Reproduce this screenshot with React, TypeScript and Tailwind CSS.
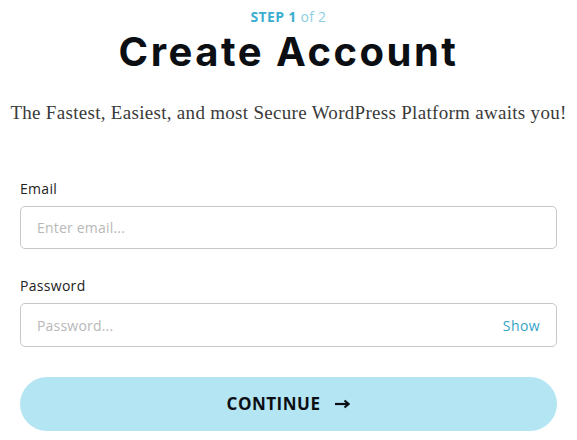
import React from "react";

const App = () => {
    return (
        <div className="min-h-[440px] w-[577px] bg-white font-['Open_Sans',sans-serif]">
            {/* Header */}
            <div className="flex flex-col items-center pt-[7px]">
                <p className="text-[14px] font-bold leading-[20px] tracking-[0.3px]">
                    <span className="text-[#3aaed0]">STEP 1</span>{" "}
                    <span className="font-medium text-[#8ed0e4]">of 2</span>
                </p>
                <h1 className="mt-[2px] font-['Inter',sans-serif] text-[40px] font-bold leading-[46px] tracking-[2.5px] text-[#0b0f14]">
                    Create Account
                </h1>
            </div>
            <p className="mt-[24px] text-center font-['Liberation_Serif',serif] text-[19px] leading-[28px] tracking-[0.3px] text-[#3a3a3a]">
                The Fastest, Easiest, and most Secure WordPress Platform awaits you!
            </p>

            {/* Form */}
            <form className="mt-[52px] flex flex-col px-[20px]">
                <label className="text-[14px] font-medium leading-[20px] tracking-[0.3px] text-[#222]">Email</label>
                <input
                    type="email"
                    placeholder="Enter email..."
                    className="mt-[7px] h-[43px] w-full rounded-[5px] border border-[#c8c8c8] px-[16px] text-[14px] tracking-[0.2px] placeholder:text-[#b8b8b8] outline-none"
                />

                <label className="mt-[27px] text-[14px] font-medium leading-[20px] tracking-[0.3px] text-[#222]">Password</label>
                <div className="relative mt-[7px]">
                    <input
                        type="password"
                        placeholder="Password..."
                        className="h-[44px] w-full rounded-[5px] border border-[#c8c8c8] px-[16px] pr-[70px] text-[14px] tracking-[0.2px] placeholder:text-[#b8b8b8] outline-none"
                    />
                    <span className="absolute right-[17px] top-1/2 -translate-y-1/2 text-[14px] font-medium tracking-[0.4px] text-[#36a3c6]">
                        Show
                    </span>
                </div>

                <button
                    type="button"
                    className="mt-[30px] flex h-[54px] w-full items-center justify-center gap-[15px] rounded-full bg-[#b3e5f3] text-[17px] font-bold tracking-[0.5px] text-[#0b0f14]"
                >
                    CONTINUE
                    <svg width="15" height="10" viewBox="0 0 15 10" fill="none">
                        <path d="M0 5h12" stroke="currentColor" strokeWidth="2.2" />
                        <path d="M9.5 1.5L13.5 5l-4 3.5" stroke="currentColor" strokeWidth="2.2" fill="none" />
                    </svg>
                </button>
            </form>
        </div>
    );
};

export default App;
